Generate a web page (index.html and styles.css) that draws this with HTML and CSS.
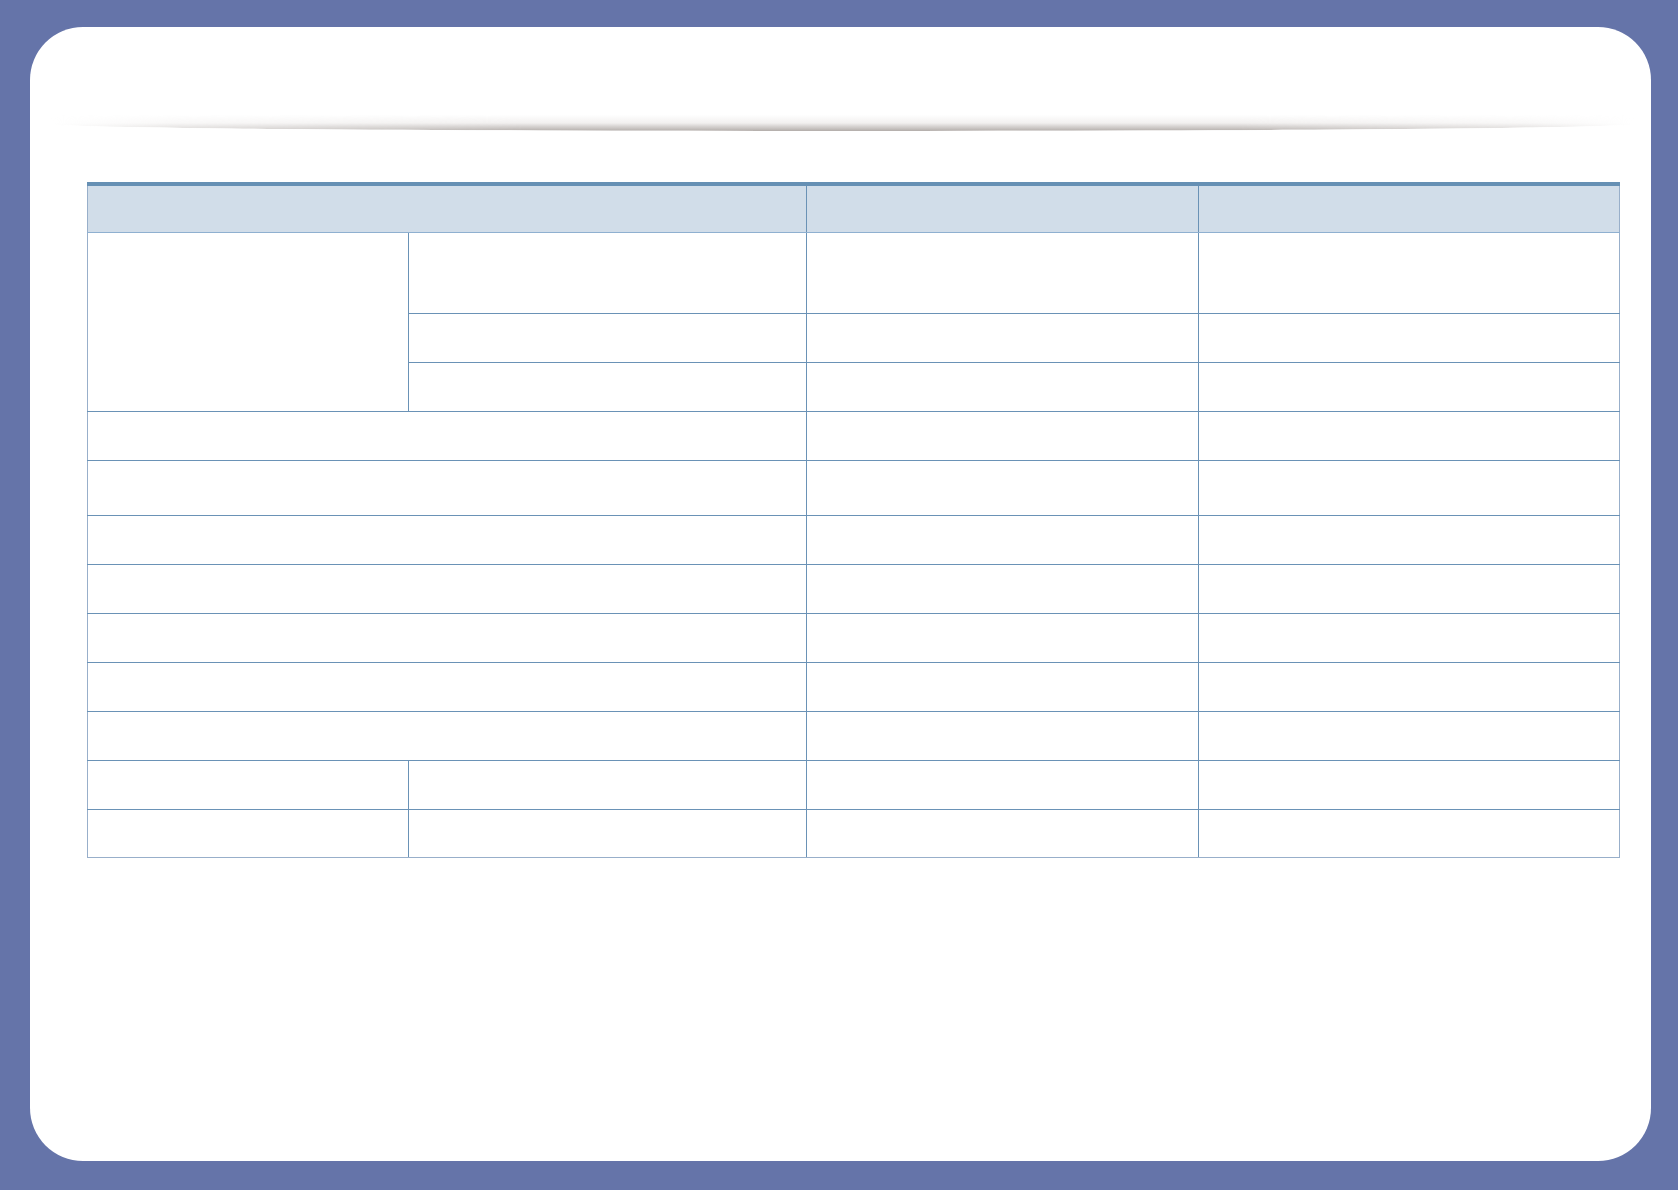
FILE: index.html
```html
<!DOCTYPE html>
<html lang="en">
<head>
  <meta charset="UTF-8" />
  <meta name="viewport" content="width=device-width, initial-scale=1.0"/>
  <title>Specifications</title>
  <link rel="stylesheet" href="styles.css">
</head>
<body>

<div class="page">
  <div class="rule"></div>

  <table class="spec">
    <colgroup>
      <col class="c1">
      <col class="c2">
      <col class="c3">
      <col class="c4">
    </colgroup>
    <thead>
      <tr class="head">
        <th colspan="2"></th>
        <th></th>
        <th></th>
      </tr>
    </thead>
    <tbody>
      <tr class="tall">
        <td rowspan="3"></td>
        <td></td>
        <td></td>
        <td></td>
      </tr>
      <tr><td></td><td></td><td></td></tr>
      <tr><td></td><td></td><td></td></tr>
      <tr><td colspan="2"></td><td></td><td></td></tr>
      <tr class="wide"><td colspan="2"></td><td></td><td></td></tr>
      <tr><td colspan="2"></td><td></td><td></td></tr>
      <tr><td colspan="2"></td><td></td><td></td></tr>
      <tr><td colspan="2"></td><td></td><td></td></tr>
      <tr><td colspan="2"></td><td></td><td></td></tr>
      <tr><td colspan="2"></td><td></td><td></td></tr>
      <tr><td></td><td></td><td></td><td></td></tr>
      <tr class="last"><td></td><td></td><td></td><td></td></tr>
    </tbody>
  </table>
</div>

</body>
</html>
```

FILE: styles.css
```css
* {
  box-sizing: border-box;
}
body {
  margin: 0;
  background: #6574a9;
  font-family: 'Liberation Sans', Arial, sans-serif;
  color: #333;
}
.page {
  background: #fff;
  margin: 27px 27px 0 30px;
  height: 1134px;
  border-radius: 53px;
  padding-top: 88px;
  overflow: hidden;
}
.rule {
  height: 16px;
  margin: 0 16px 0 20px;
  background: linear-gradient(to bottom, rgba(255,255,255,0) 0%, rgba(232,229,228,0.6) 50%, #b3adaa 100%);
  border-radius: 0 0 50% 50% / 0 0 7px 7px;
  -webkit-mask-image: linear-gradient(to right, transparent 0%, rgba(0,0,0,0.5) 8%, #000 30%, #000 75%, rgba(0,0,0,0.5) 93%, transparent 100%);
  mask-image: linear-gradient(to right, transparent 0%, rgba(0,0,0,0.5) 8%, #000 30%, #000 75%, rgba(0,0,0,0.5) 93%, transparent 100%);
}
.spec {
  margin: 51px 0 0 57px;
  width: 1532px;
  border-collapse: collapse;
  table-layout: fixed;
  border-left: 1px solid #98afca;
  border-right: 1px solid #98afca;
  border-bottom: 1px solid #98afca;
}
.c1 { width: 321px; }
.c2 { width: 398px; }
.c3 { width: 392px; }
.c4 { width: 421px; }
.spec th {
  background: #d1dde9;
  border-top: 4px solid #6690b4;
  border-bottom: 1px solid #8fb0d0;
  border-left: 1px solid #6a92b6;
  height: 48px;
  padding: 0;
}
.spec td {
  border: 1px solid #6a92b6;
  height: 49px;
  padding: 0;
}
.spec tr.tall td {
  height: 81px;
}
.spec tr.wide td {
  height: 55px;
}
.spec tr.last td {
  height: 48px;
  border-bottom-color: #98afca;
}
.spec td:first-child,
.spec th:first-child {
  border-left-color: #98afca;
}
.spec td:last-child,
.spec th:last-child {
  border-right-color: #98afca;
}
```
